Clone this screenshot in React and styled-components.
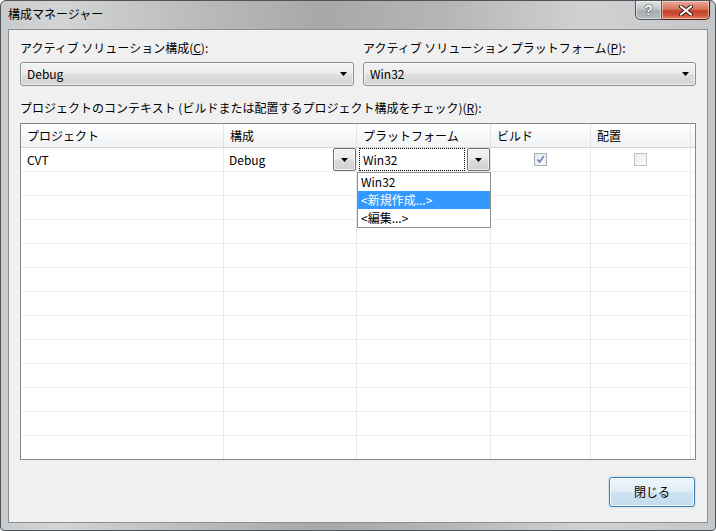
import React from "react";
import styled, { createGlobalStyle } from "styled-components";

const GlobalStyle = createGlobalStyle`
  html, body {
    margin: 0;
    padding: 0;
    background: #ffffff;
  }
  body {
    font-family: "Noto Sans CJK JP", "Noto Sans", sans-serif;
    font-size: 12px;
    color: #000;
  }
  * {
    box-sizing: border-box;
  }
`;

const Window = styled.div`
  width: 716px;
  height: 531px;
  display: flex;
  flex-direction: column;
  border: 1px solid #4f5458;
  border-radius: 6px 6px 4px 4px;
  overflow: hidden;
  background: linear-gradient(
    90deg,
    #c9cbcd 0%,
    #d2d4d6 8%,
    #b8babc 28%,
    #a6a8aa 45%,
    #b3b5b7 62%,
    #cfd1d3 82%,
    #c4c6c8 100%
  );
`;

const TitleBar = styled.div`
  height: 28px;
  display: flex;
  align-items: flex-start;
  padding-left: 7px;
`;

const Title = styled.div`
  margin-top: 4px;
  line-height: 18px;
  font-size: 12px;
  color: #000;
`;

const CaptionButtons = styled.div`
  margin-left: auto;
  margin-right: 5px;
  margin-top: -1px;
  display: flex;
`;

const CaptionButton = styled.div`
  width: ${(p) => p.$w}px;
  height: 20px;
  display: flex;
  align-items: center;
  justify-content: center;
  border: 1px solid ${(p) => (p.$close ? "#4a1c14" : "#4f5458")};
  border-left-width: ${(p) => (p.$close ? 0 : 1)}px;
  border-radius: ${(p) => (p.$close ? "0 0 5px 0" : "0 0 0 5px")};
  background: ${(p) =>
    p.$close
      ? "linear-gradient(180deg, #e9a99c 0%, #d7755f 45%, #c2412a 55%, #d0563a 80%, #e28a6a 100%)"
      : "linear-gradient(180deg, #dfe1e3 0%, #c4c7ca 45%, #a9adb1 55%, #b8bcc0 100%)"};
  box-shadow: inset 0 0 0 1px rgba(255, 255, 255, 0.45);
  color: #fff;
  font-family: "Liberation Sans", sans-serif;
  font-weight: bold;
  font-size: 14px;
  text-shadow: 0 0 2px #2c2c2c, 0 0 1px #2c2c2c;
`;

const Client = styled.div`
  flex: 1;
  margin: 0 7px 7px;
  border: 1px solid #8b9096;
  background: #f0f0f0;
  padding: 9px 11px 0;
  display: flex;
  flex-direction: column;
`;

const TopRow = styled.div`
  display: grid;
  grid-template-columns: 334px 333px;
  column-gap: 9px;
`;

const Field = styled.div`
  display: flex;
  flex-direction: column;
  gap: 5px;
`;

const Label = styled.div`
  line-height: 18px;
  height: 18px;
  white-space: nowrap;
  margin-top: ${(p) => p.$top || 0}px;
`;

const Combo = styled.div`
  height: 24px;
  display: flex;
  align-items: center;
  padding: 0 6px 0 6px;
  border: 1px solid #8e8f8f;
  border-radius: 3px;
  background: linear-gradient(180deg, #f3f3f3 0%, #ececec 48%, #dfdfdf 52%, #d2d2d2 100%);
  box-shadow: inset 0 0 0 1px rgba(255, 255, 255, 0.6);
`;

const ComboText = styled.span`
  flex: 1;
  line-height: 18px;
`;

const GridBox = styled.div`
  margin-top: 6px;
  height: 337px;
  border: 1px solid #828790;
  background: #fff;
  overflow: hidden;
`;

const GridRow = styled.div`
  display: grid;
  grid-template-columns: 203px 133px 134px 100px 100px 1fr;
  height: 24px;
  border-bottom: 1px solid ${(p) => (p.$head ? "#d5d5d5" : "#efeff2")};
  background: ${(p) => (p.$head ? "linear-gradient(180deg, #ffffff 0%, #f7f8f9 50%, #f1f2f4 100%)" : "#fff")};
`;

const Cell = styled.div`
  position: relative;
  border-right: 1px solid ${(p) => (p.$head ? "#e2e4e8" : "#e6e8ef")};
  display: flex;
  align-items: ${(p) => (p.$center ? "center" : "flex-start")};
  justify-content: ${(p) => (p.$center ? "center" : "flex-start")};
  padding-left: ${(p) => (p.$pad === undefined ? 6 : p.$pad)}px;
  line-height: 23px;
  white-space: nowrap;
  &:last-child {
    border-right: none;
  }
`;

const CellText = styled.span`
  flex: 1;
`;

const DropButton = styled.div`
  width: 23px;
  height: 23px;
  flex: none;
  display: flex;
  align-items: center;
  justify-content: center;
  border: 1px solid #707070;
  border-radius: 2px;
  background: linear-gradient(180deg, #f4f4f4 0%, #ebebeb 48%, #dcdcdc 52%, #cfcfcf 100%);
  box-shadow: inset 0 0 0 1px rgba(255, 255, 255, 0.7);
  margin-left: auto;
`;

const FocusBox = styled.div`
  width: 106px;
  height: 23px;
  border: 1px dotted #000;
  padding-left: 3px;
  line-height: 21px;
`;

const DropList = styled.div`
  position: absolute;
  left: 0;
  top: 24px;
  width: 134px;
  border: 1px solid #8f8f8f;
  background: #fff;
  z-index: 2;
`;

const DropItem = styled.div`
  height: 18px;
  line-height: 18px;
  padding-left: 3px;
  background: ${(p) => (p.$selected ? "#3399ff" : "#fff")};
  color: ${(p) => (p.$selected ? "#fff" : "#000")};
`;

const CheckBox = styled.div`
  width: 13px;
  height: 13px;
  border: 1px solid ${(p) => (p.$checked ? "#a4acb8" : "#c2c2c2")};
  background: ${(p) =>
    p.$checked ? "linear-gradient(135deg, #e6e9ee 0%, #f7f8fa 100%)" : "linear-gradient(135deg, #ececec 0%, #fafafa 100%)"};
  display: flex;
  align-items: center;
  justify-content: center;
`;

const Footer = styled.div`
  margin-top: 17px;
  display: flex;
  justify-content: flex-end;
  padding-right: 1px;
`;

const Button = styled.div`
  width: 86px;
  height: 30px;
  display: flex;
  align-items: center;
  justify-content: center;
  border: 1px solid #3c7fb1;
  border-radius: 3px;
  background: linear-gradient(180deg, #eef6fb 0%, #e1eef8 48%, #cfe3f1 52%, #c2dbee 100%);
  box-shadow: inset 0 0 0 1px rgba(255, 255, 255, 0.75), 0 0 2px rgba(60, 160, 220, 0.5);
  line-height: 18px;
`;

const Arrow = () => (
  <svg width="7" height="4" viewBox="0 0 7 4">
    <path d="M0 0 H7 L3.5 4 Z" fill="#000" />
  </svg>
);

const CloseGlyph = () => (
  <svg width="14" height="11" viewBox="0 0 14 11">
    <path d="M2 1.5 L12 9.5 M12 1.5 L2 9.5" stroke="#3a1a14" strokeWidth="4" strokeLinecap="round" />
    <path d="M2 1.5 L12 9.5 M12 1.5 L2 9.5" stroke="#ffffff" strokeWidth="2.2" strokeLinecap="round" />
  </svg>
);

const Check = () => (
  <svg width="11" height="11" viewBox="0 0 11 11">
    <path d="M2.5 5.5 L4.6 8 L8.8 2.2" stroke="#4e6aa6" strokeWidth="1.6" fill="none" opacity="0.85" />
  </svg>
);

const headers = ["プロジェクト", "構成", "プラットフォーム", "ビルド", "配置", ""];
const emptyRows = Array.from({ length: 12 });

export default function App() {
  return (
    <>
      <GlobalStyle />
      <Window>
        <TitleBar>
          <Title>構成マネージャー</Title>
          <CaptionButtons>
            <CaptionButton $w={27}>?</CaptionButton>
            <CaptionButton $w={48} $close>
              <CloseGlyph />
            </CaptionButton>
          </CaptionButtons>
        </TitleBar>
        <Client>
          <TopRow>
            <Field>
              <Label>
                アクティブ ソリューション構成(<u>C</u>):
              </Label>
              <Combo>
                <ComboText>Debug</ComboText>
                <Arrow />
              </Combo>
            </Field>
            <Field>
              <Label>
                アクティブ ソリューション プラットフォーム(<u>P</u>):
              </Label>
              <Combo>
                <ComboText>Win32</ComboText>
                <Arrow />
              </Combo>
            </Field>
          </TopRow>
          <Label $top={13}>
            プロジェクトのコンテキスト (ビルドまたは配置するプロジェクト構成をチェック)(<u>R</u>):
          </Label>
          <GridBox>
            <GridRow $head>
              {headers.map((h, i) => (
                <Cell key={i} $head>
                  {h}
                </Cell>
              ))}
            </GridRow>
            <GridRow>
              <Cell>CVT</Cell>
              <Cell $pad={5}>
                <CellText>Debug</CellText>
                <DropButton>
                  <Arrow />
                </DropButton>
              </Cell>
              <Cell $pad={2}>
                <FocusBox>Win32</FocusBox>
                <DropButton>
                  <Arrow />
                </DropButton>
                <DropList>
                  <DropItem>Win32</DropItem>
                  <DropItem $selected>&lt;新規作成...&gt;</DropItem>
                  <DropItem>&lt;編集...&gt;</DropItem>
                </DropList>
              </Cell>
              <Cell $center $pad={0}>
                <CheckBox $checked>
                  <Check />
                </CheckBox>
              </Cell>
              <Cell $center $pad={0}>
                <CheckBox />
              </Cell>
              <Cell />
            </GridRow>
            {emptyRows.map((_, r) => (
              <GridRow key={r}>
                {headers.map((_, i) => (
                  <Cell key={i} />
                ))}
              </GridRow>
            ))}
          </GridBox>
          <Footer>
            <Button>閉じる</Button>
          </Footer>
        </Client>
      </Window>
    </>
  );
}
